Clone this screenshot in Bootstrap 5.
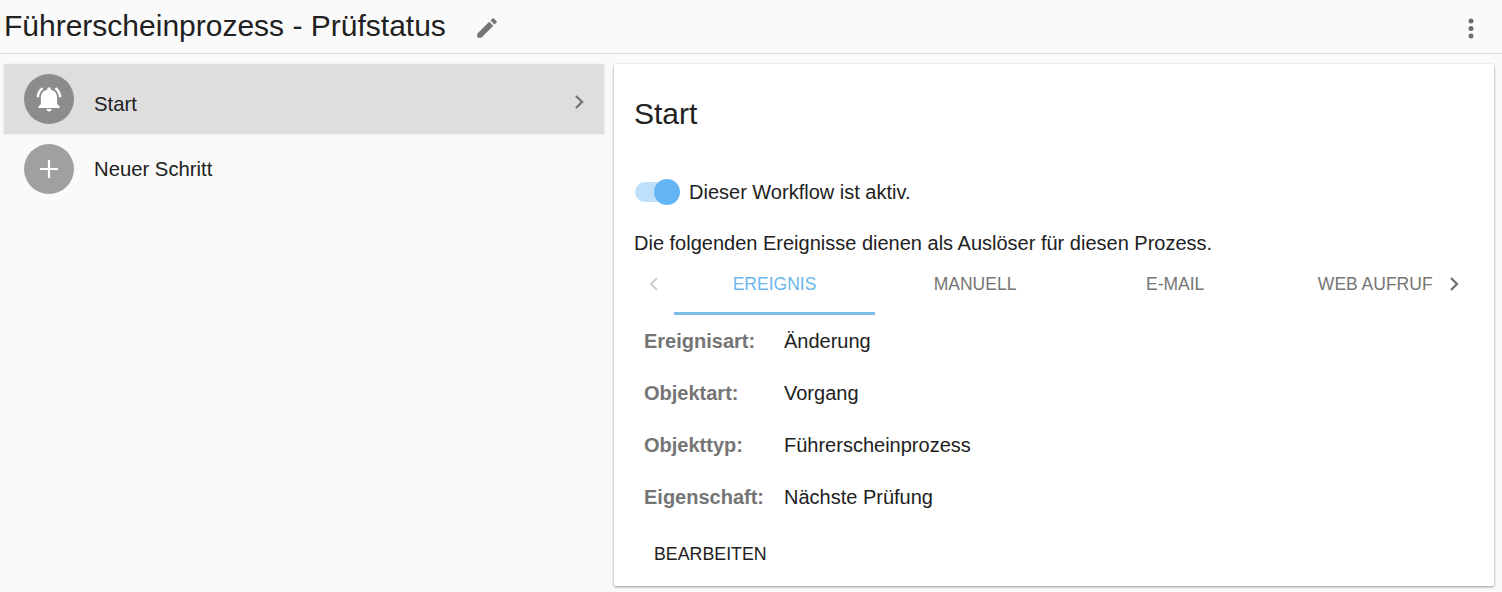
<!DOCTYPE html>
<html lang="de">
<head>
<meta charset="utf-8">
<title>Workflow</title>
<link href="https://cdn.jsdelivr.net/npm/bootstrap@5.3.0/dist/css/bootstrap.min.css" rel="stylesheet">
<style>
html,body{height:592px;overflow:hidden}
body{background:#fafafa;font-family:"Liberation Sans",Arial,sans-serif;color:#212121;font-size:20px}
.topbar{height:54px;border-bottom:1px solid #dcdcdc;padding:0 27px 2px 4px}
.page-title{font-size:30px;font-weight:400;margin:0;line-height:1;color:#212121}
.edit-ico{margin-left:28px;margin-top:5px}
.dots-ico{margin-top:6px}
.main-area{padding:10px 8px 0 4px;gap:10px}
.steps{width:600px;flex:none}
.step{height:70px;padding:0 18px 0 20px;font-size:20.3px}
.step-active{background:#dedede;box-shadow:0 0 3px rgba(0,0,0,.08)}
.disc{width:50px;height:50px;border-radius:50%;margin-right:20px;flex:none}
.disc-dark{background:#8c8c8c}
.disc-light{background:#a0a0a0}
.step-label-low{padding-top:10px}
.step-chev{margin-left:auto;margin-top:6px;margin-right:1px}
.panel{width:880px;height:522px;flex:none;background:#fff;padding:0 20px;box-shadow:0 1px 3px rgba(0,0,0,.4);border-radius:2px}
.panel-title{font-size:30px;font-weight:400;margin:0;padding-top:33px;line-height:34px;height:116px}
.toggle-row{height:24px;font-size:20px;line-height:24px}
.track{width:45px;height:20px;position:relative;margin:0 9px 0 1px;flex:none}
.track-bar{width:36px;height:20px;border-radius:10px;background:#bfe0fb}
.knob{position:absolute;right:0;top:-3px;width:26px;height:26px;border-radius:50%;background:#64b5f6}
.intro{margin:27px 0 0;line-height:24px;font-size:20px}
.tabstrip{height:54px;margin-top:6px;width:840px}
.tab-arrow{width:40px;flex:none;height:46px}
.tab-scroller{width:760px;flex:none;overflow:hidden}
.tab-item{width:200.1px;flex:none;text-align:center;font-size:17.5px;color:#757575;height:54px;line-height:47px;white-space:nowrap;border-bottom:3px solid transparent}
.tab-on{color:#6cb8ee;border-bottom-color:#7cbce6;width:201px}
.facts{padding:0 10px}
.fact{height:52px;font-size:20px;line-height:52px}
.fact-key{width:140px;flex:none;font-weight:700;color:#757575}
.edit-action{font-size:17.8px;color:#212121;padding:0;margin:19px 0 0 20px;border:0;background:none;line-height:24px}
</style>
</head>
<body>
<header class="topbar d-flex align-items-center">
  <h1 class="page-title">Führerscheinprozess - Prüfstatus</h1>
  <svg class="edit-ico" width="26" height="26" viewBox="0 0 24 24" fill="#757575"><path d="M3 17.25V21h3.75L17.81 9.94l-3.75-3.75L3 17.25zM20.71 7.04a1 1 0 0 0 0-1.41l-2.34-2.34a1 1 0 0 0-1.41 0l-1.83 1.83 3.75 3.75 1.83-1.83z"/></svg>
  <svg class="ms-auto dots-ico" width="8" height="22" viewBox="0 0 8 22" fill="#6e6e6e"><circle cx="4" cy="3" r="2.5"/><circle cx="4" cy="10.5" r="2.5"/><circle cx="4" cy="18" r="2.5"/></svg>
</header>
<div class="d-flex main-area">
  <div class="steps">
    <div class="step step-active d-flex align-items-center">
      <span class="disc disc-dark d-flex align-items-center justify-content-center">
        <svg width="30" height="30" viewBox="0 0 24 24" fill="#fff"><path d="M7.58 4.08 6.15 2.65C3.75 4.48 2.17 7.3 2.03 10.5h2c.15-2.65 1.51-4.97 3.55-6.42zM19.97 10.5h2c-.15-3.2-1.73-6.02-4.12-7.85l-1.42 1.43c2.02 1.45 3.39 3.77 3.54 6.42zM18.5 11c0-3.07-1.9-5.64-5-6.32V4a1.5 1.5 0 0 0-3 0v.68C7.4 5.36 5.5 7.92 5.5 11v5l-2 2v1.2h17V18l-2-2v-5zM12 22c.14 0 .27-.01.4-.04.65-.14 1.18-.58 1.44-1.18.1-.24.16-.5.16-.78h-4c0 1.1.9 2 2 2z"/></svg>
      </span>
      <span class="step-label-low">Start</span>
      <svg class="step-chev" width="12" height="16" viewBox="0 0 12 16" fill="none" stroke="#757575" stroke-width="2.4"><path d="M3 2l6 6-6 6"/></svg>
    </div>
    <div class="step d-flex align-items-center">
      <span class="disc disc-light d-flex align-items-center justify-content-center">
        <svg width="20" height="20" viewBox="0 0 20 20" stroke="#fff" stroke-width="2.2"><path d="M10 1v18M1 10h18"/></svg>
      </span>
      <span>Neuer Schritt</span>
    </div>
  </div>
  <section class="panel">
    <h2 class="panel-title">Start</h2>
    <div class="toggle-row d-flex align-items-center">
      <span class="track"><span class="track-bar d-block"></span><span class="knob"></span></span>
      <span>Dieser Workflow ist aktiv.</span>
    </div>
    <p class="intro">Die folgenden Ereignisse dienen als Auslöser für diesen Prozess.</p>
    <div class="tabstrip d-flex">
      <span class="tab-arrow d-flex align-items-center justify-content-center"><svg width="12" height="16" viewBox="0 0 12 16" fill="none" stroke="#d0d0d0" stroke-width="2"><path d="M9 2l-6 6 6 6"/></svg></span>
      <div class="tab-scroller d-flex">
        <span class="tab-item tab-on">EREIGNIS</span>
        <span class="tab-item">MANUELL</span>
        <span class="tab-item">E-MAIL</span>
        <span class="tab-item">WEB AUFRUF</span>
      </div>
      <span class="tab-arrow d-flex align-items-center justify-content-center"><svg width="12" height="16" viewBox="0 0 12 16" fill="none" stroke="#757575" stroke-width="2.4"><path d="M3 2l6 6-6 6"/></svg></span>
    </div>
    <div class="facts">
      <div class="fact d-flex"><span class="fact-key">Ereignisart:</span><span>Änderung</span></div>
      <div class="fact d-flex"><span class="fact-key">Objektart:</span><span>Vorgang</span></div>
      <div class="fact d-flex"><span class="fact-key">Objekttyp:</span><span>Führerscheinprozess</span></div>
      <div class="fact d-flex"><span class="fact-key">Eigenschaft:</span><span>Nächste Prüfung</span></div>
    </div>
    <button type="button" class="edit-action btn">BEARBEITEN</button>
  </section>
</div>
</body>
</html>
